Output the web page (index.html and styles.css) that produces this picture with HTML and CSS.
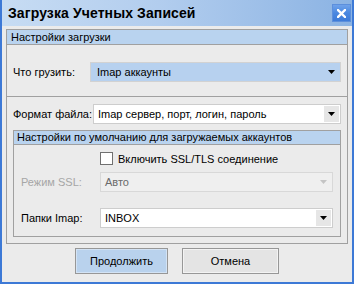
FILE: index.html
```html
<!DOCTYPE html>
<html lang="ru">
<head>
<meta charset="utf-8">
<link rel="stylesheet" href="styles.css">
</head>
<body>
<div class="window">
  <div class="titlebar">
    <span class="title">Загрузка Учетных Записей</span>
    <span class="close"><svg width="9" height="9" viewBox="0 0 9 9"><path d="M1 1 L8 8 M8 1 L1 8" stroke="#fff" stroke-width="2.4" stroke-linecap="square"/></svg></span>
  </div>
  <div class="body">
    <div class="group">
      <div class="group-head">Настройки загрузки</div>
      <div class="row row-what">
        <span class="label label-main">Что грузить:</span>
        <div class="combo combo-selected">
          <span class="combo-text combo-text-wide">Imap аккаунты</span>
          <span class="arrow-box"><svg width="7" height="4" viewBox="0 0 7 4"><polygon points="0,0 7,0 3.5,4" fill="#000"/></svg></span>
        </div>
      </div>
      <div class="divider"></div>
      <div class="row row-format">
        <span class="label label-format">Формат файла:</span>
        <div class="combo">
          <span class="combo-text">Imap сервер, порт, логин, пароль</span>
          <span class="arrow-box arrow-box-grey"><svg width="7" height="4" viewBox="0 0 7 4"><polygon points="0,0 7,0 3.5,4" fill="#000"/></svg></span>
        </div>
      </div>
      <div class="group group-inner">
        <div class="group-head group-head-inner">Настройки по умолчанию для загружаемых аккаунтов</div>
        <div class="check-row">
          <span class="checkbox"></span>
          <span class="check-label">Включить SSL/TLS соединение</span>
        </div>
        <div class="row row-inner row-ssl">
          <span class="label label-inner label-disabled">Режим SSL:</span>
          <div class="combo combo-disabled">
            <span class="combo-text">Авто</span>
            <span class="arrow-box"><svg width="7" height="4" viewBox="0 0 7 4"><polygon points="0,0 7,0 3.5,4" fill="#c4c4c4"/></svg></span>
          </div>
        </div>
        <div class="row row-inner row-folders">
          <span class="label label-inner">Папки Imap:</span>
          <div class="combo">
            <span class="combo-text">INBOX</span>
            <span class="arrow-box arrow-box-grey"><svg width="7" height="4" viewBox="0 0 7 4"><polygon points="0,0 7,0 3.5,4" fill="#000"/></svg></span>
          </div>
        </div>
      </div>
    </div>
    <div class="buttons">
      <span class="btn btn-primary">Продолжить</span>
      <span class="btn btn-cancel">Отмена</span>
    </div>
  </div>
</div>
</body>
</html>
```

FILE: styles.css
```css
* { box-sizing: border-box; }
html, body { margin: 0; padding: 0; }
body {
  width: 354px;
  height: 284px;
  font-family: "Liberation Sans", Arial, sans-serif;
  font-size: 11px;
  color: #000;
  overflow: hidden;
}
.window {
  width: 354px;
  height: 284px;
  border: 2px solid #3d79d6;
  border-top: 0;
  display: flex;
  flex-direction: column;
  background: #ebebeb;
}
.titlebar {
  height: 26px;
  flex: none;
  display: flex;
  align-items: flex-start;
  justify-content: space-between;
  background: linear-gradient(to right, #c7dcf3 0%, #b2cdee 45%, #8bb3e3 100%);
}
.title {
  font-weight: bold;
  font-size: 14px;
  line-height: 26px;
  padding-left: 6px;
  letter-spacing: 0.1px;
}
.close {
  width: 19px;
  height: 18px;
  margin-top: 4px;
  margin-right: 1px;
  display: flex;
  align-items: center;
  justify-content: center;
  background: linear-gradient(to bottom, #6fa2ea 0%, #4a88e0 50%, #3d7bd8 100%);
  border: 1px solid #5c8fdc;
}
.body {
  flex: 1;
  display: flex;
  flex-direction: column;
}
.group {
  margin: 3px 4px 0 4px;
  border: 1px solid #a0a0a0;
  display: flex;
  flex-direction: column;
}
.group-head {
  height: 15px;
  line-height: 14px;
  padding-left: 4px;
  background: #b9d3ef;
  border-bottom: 1px solid #a0a0a0;
}
.group-head-inner {
  height: 14px;
  line-height: 13px;
  padding-left: 3px;
}
.row {
  display: flex;
  align-items: center;
  padding: 0 6px;
}
.row-what {
  padding-top: 17px;
  padding-bottom: 14px;
}
.row-format {
  padding-top: 7px;
}
.divider {
  height: 1px;
  background: #a0a0a0;
}
.label { flex: none; }
.label-main { width: 77px; }
.label-format { width: 80px; }
.label-inner { width: 79px; }
.label-disabled { color: #a6a6a6; }
.combo {
  flex: 1;
  height: 20px;
  display: flex;
  align-items: center;
  justify-content: space-between;
  background: #fff;
  border: 1px solid #cdcdcd;
  padding: 1px;
}
.combo-text { padding-left: 3px; white-space: nowrap; }
.combo-text-wide { padding-left: 5px; }
.combo-selected {
  background: #b7d1ef;
  border-color: #d2d2d2;
}
.combo-disabled {
  background: #efefef;
  border-color: #d8d8d8;
  color: #6a6a6a;
}
.arrow-box {
  width: 15px;
  height: 16px;
  display: flex;
  align-items: center;
  justify-content: center;
}
.arrow-box-grey { background: #e6e6e6; }
.group-inner {
  margin: 6px 6px 6px 6px;
}
.check-row {
  display: flex;
  align-items: center;
  padding-top: 7px;
  padding-left: 86px;
  height: 20px;
}
.checkbox {
  width: 13px;
  height: 13px;
  border: 1px solid #707070;
  background: #fff;
  flex: none;
}
.check-label { padding-left: 5px; }
.row-inner {
  padding-left: 7px;
  padding-right: 7px;
}
.row-ssl { padding-top: 7px; }
.row-folders { padding-top: 16px; padding-bottom: 8px; }
.buttons {
  display: flex;
  justify-content: center;
  gap: 14px;
  padding-top: 4px;
}
.btn {
  height: 26px;
  display: flex;
  align-items: center;
  justify-content: center;
  border: 1px solid #979797;
}
.btn-primary {
  width: 93px;
  background: #b9d2ed;
  box-shadow: inset 0 0 0 1px #d3e3f5;
}
.btn-cancel {
  width: 97px;
  background: #e4e4e4;
  box-shadow: inset 0 0 0 1px #f3f3f3;
}
```
